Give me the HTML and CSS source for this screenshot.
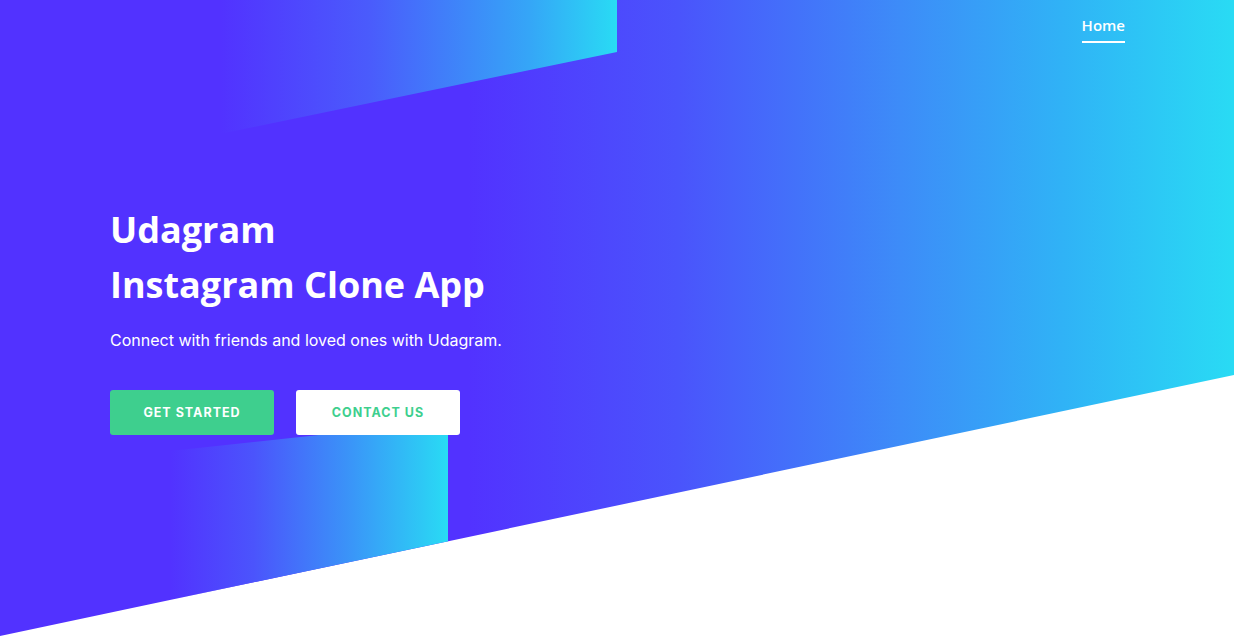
FILE: index.html
```html
<!DOCTYPE html>
<html lang="en">
<head>
<meta charset="utf-8">
<title>Udagram</title>
<link rel="stylesheet" href="styles.css">
</head>
<body>
<section class="hero">
  <div class="shape shape-top"></div>
  <div class="shape shape-bottom"></div>
  <header class="topbar">
    <nav class="nav">
      <a class="nav-link active" href="#">Home</a>
    </nav>
  </header>
  <div class="hero-content">
    <h1 class="hero-title">Udagram<br>Instagram Clone App</h1>
    <p class="hero-text">Connect with friends and loved ones with Udagram.</p>
    <div class="actions">
      <a class="btn btn-primary" href="#">GET STARTED</a>
      <a class="btn btn-light" href="#">CONTACT US</a>
    </div>
  </div>
</section>
</body>
</html>
```
FILE: styles.css
```css
* { box-sizing: border-box; }
html, body { margin: 0; padding: 0; }
body {
  background: #ffffff;
  font-family: "Inter", "Open Sans", sans-serif;
  overflow: hidden;
}
.hero {
  position: relative;
  height: 636px;
  background: linear-gradient(to right, #5232ff 0%, #5232ff 38%, #4a54fc 55%, #3d8cf8 73%, #30b2f6 86%, #29dbf4 100%);
  clip-path: polygon(0 0, 100% 0, 100% 375px, 0 636px);
}
.shape {
  position: absolute;
}
.shape-top {
  left: 220px;
  top: 0;
  width: 397px;
  height: 140px;
  background: linear-gradient(to right, rgba(82,50,255,0) 0%, #4a5cfc 38%, #35a6f7 78%, #29dbf4 100%);
  clip-path: polygon(0 0, 100% 0, 100% 52px, 0 134px);
}
.shape-bottom {
  left: 170px;
  top: 415px;
  width: 278px;
  height: 200px;
  background: linear-gradient(to right, rgba(82,50,255,0) 0%, #4b54fc 30%, #3a95f8 65%, #29dbf4 100%);
  clip-path: polygon(0 36px, 100% 6px, 100% 100%, 0 100%);
}
.topbar {
  position: relative;
  display: flex;
  justify-content: flex-end;
  padding: 15px 109px 0 0;
}
.nav { display: flex; gap: 30px; }
.nav-link {
  color: #ffffff;
  text-decoration: none;
  font-family: "Open Sans", sans-serif;
  font-size: 15px;
  font-weight: 600;
  line-height: 20px;
  padding-bottom: 6px;
  border-bottom: 2px solid #ffffff;
}
.hero-content {
  position: relative;
  padding: 159px 0 0 110px;
}
.hero-title {
  margin: 0;
  color: #ffffff;
  font-family: "Open Sans", sans-serif;
  font-weight: 700;
  font-size: 36px;
  line-height: 55px;
  letter-spacing: 0;
}
.hero-text {
  margin: 16px 0 0;
  color: #ffffff;
  font-size: 16px;
  line-height: 24px;
}
.actions {
  display: flex;
  gap: 22px;
  margin-top: 38px;
}
.btn {
  display: flex;
  align-items: center;
  justify-content: center;
  width: 164px;
  height: 45px;
  border-radius: 3px;
  font-size: 12.5px;
  font-weight: 700;
  letter-spacing: 1px;
  text-decoration: none;
}
.btn-primary {
  background: #3ecf8e;
  color: #ffffff;
}
.btn-light {
  background: #ffffff;
  color: #3ecf8e;
}
```
